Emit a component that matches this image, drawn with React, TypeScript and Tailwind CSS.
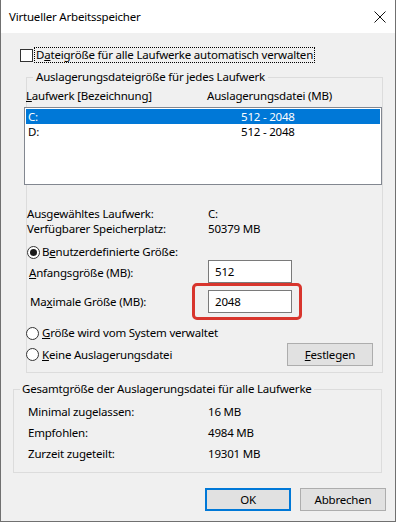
import React from "react";

const Radio = ({ checked }: { checked?: boolean }) => (
  <svg width="13" height="13" viewBox="0 0 13 13" className="shrink-0">
    <circle cx="6.5" cy="6.5" r="6" fill="#fff" stroke="#333" strokeWidth="1" />
    {checked && <circle cx="6.5" cy="6.5" r="3.5" fill="#1a1a1a" />}
  </svg>
);

const Btn = ({ children, primary }: { children: React.ReactNode; primary?: boolean }) => (
  <div
    className={
      "w-[86px] h-[23px] flex items-center justify-center bg-[#e1e1e1] " +
      (primary ? "border-2 border-[#0078d7]" : "border border-[#adadad]")
    }
  >
    {children}
  </div>
);

export default function App() {
  return (
    <div
      className="w-[396px] h-[522px] bg-[#f0f0f0] border-x border-b border-[#707070] flex flex-col text-[11.5px] tracking-[-0.2px] leading-[16px] text-black"
      style={{ fontFamily: '"Noto Sans", "Open Sans", sans-serif' }}
    >
      {/* Title bar */}
      <div className="h-[33px] bg-white flex items-center justify-between pl-[8px] pr-[9px] shrink-0">
        <span>Virtueller Arbeitsspeicher</span>
        <svg width="12" height="12" viewBox="0 0 12 12">
          <path d="M0.5 0.5 L11.5 11.5 M11.5 0.5 L0.5 11.5" stroke="#111" strokeWidth="1" />
        </svg>
      </div>

      {/* Checkbox row */}
      <div className="mt-[14px] ml-[19px] flex items-center h-[16px]">
        <span className="w-[13px] h-[13px] bg-white border border-[#333] shrink-0" />
        <span className="ml-[1px] px-[1px] h-[16px] leading-[14px] border border-dotted border-black">
          D<u>a</u>teigröße für alle Laufwerke automatisch verwalten
        </span>
      </div>

      {/* Group 1 */}
      <fieldset className="mt-[6px] ml-[25px] w-[356px] border border-[#dcdcdc]">
        <legend className="ml-[6px] px-[3px] leading-[16px]">Auslagerungsdateigröße für jedes Laufwerk</legend>
        <div className="pb-[6px]">
          <div className="mt-[3px] -ml-[1px] flex h-[16px]">
            <span className="w-[181px]">
              <u>L</u>aufwerk [Bezeichnung]
            </span>
            <span>Auslagerungsdatei (MB)</span>
          </div>

          <div className="mt-[3px] -ml-[3px] w-[358px] h-[78px] bg-white border border-[#828790] p-[1px]">
            <div className="h-[15px] bg-[#0078d7] text-white flex items-center pl-[2px] leading-[15px]">
              <span className="w-[213px]">C:</span>
              <span>512 - 2048</span>
            </div>
            <div className="h-[15px] flex items-center pl-[2px] leading-[15px]">
              <span className="w-[213px]">D:</span>
              <span>512 - 2048</span>
            </div>
          </div>

          <div className="mt-[21px] flex h-[15px] leading-[15px]">
            <span className="w-[181px]">Ausgewähltes Laufwerk:</span>
            <span>C:</span>
          </div>
          <div className="flex h-[15px] leading-[15px]">
            <span className="w-[181px]">Verfügbarer Speicherplatz:</span>
            <span>50379 MB</span>
          </div>

          <div className="mt-[8px] flex items-center h-[16px] gap-[2px]">
            <Radio checked />
            <span>
              B<u>e</u>nutzerdefinierte Größe:
            </span>
          </div>

          <div className="flex items-center">
            <span className="ml-[2px] w-[179px] pt-[2px]">
              <u>A</u>nfangsgröße (MB):
            </span>
            <div className="w-[84px] h-[23px] bg-white border border-[#7a7a7a] flex items-center pl-[6px]">512</div>
          </div>

          <div className="mt-[7px] flex items-center">
            <span className="ml-[3px] w-[178px] pt-[1px]">
              Ma<u>x</u>imale Größe (MB):
            </span>
            <div className="relative w-[84px] h-[23px] bg-white border border-[#7a7a7a] flex items-center pl-[6px]">
              2048
              <span className="absolute -left-[17px] -top-[8px] -right-[11px] -bottom-[8px] border-[3px] border-[#d8352d] rounded-[5px]" />
            </div>
          </div>

          <div className="mt-[12px] -ml-[1px] flex items-center h-[16px] gap-[3px]">
            <Radio />
            <span>
              <u>G</u>röße wird vom System verwaltet
            </span>
          </div>

          <div className="mt-[2px] flex items-center h-[23px]">
            <div className="-ml-[1px] flex items-center gap-[3px]">
              <Radio />
              <span>
                <u>K</u>eine Auslagerungsdatei
              </span>
            </div>
            <div className="ml-auto mr-[9px]">
              <Btn>
                <span>
                  <u>F</u>estlegen
                </span>
              </Btn>
            </div>
          </div>
        </div>
      </fieldset>

      {/* Group 2 */}
      <fieldset className="mt-[8px] ml-[12px] w-[369px] border border-[#dcdcdc]">
        <legend className="ml-[6px] px-[2px] leading-[16px]">Gesamtgröße der Auslagerungsdatei für alle Laufwerke</legend>
        <div className="mt-[4px] pb-[8px] ml-[14px]">
          <div className="flex h-[21px] items-center">
            <span className="w-[180px]">Minimal zugelassen:</span>
            <span>16 MB</span>
          </div>
          <div className="flex h-[21px] items-center">
            <span className="w-[180px]">Empfohlen:</span>
            <span>4984 MB</span>
          </div>
          <div className="flex h-[21px] items-center">
            <span className="w-[180px]">Zurzeit zugeteilt:</span>
            <span>19301 MB</span>
          </div>
        </div>
      </fieldset>

      {/* Buttons */}
      <div className="mt-[15px] flex justify-end gap-[9px] pr-[9px]">
        <Btn primary>OK</Btn>
        <Btn>Abbrechen</Btn>
      </div>
    </div>
  );
}
